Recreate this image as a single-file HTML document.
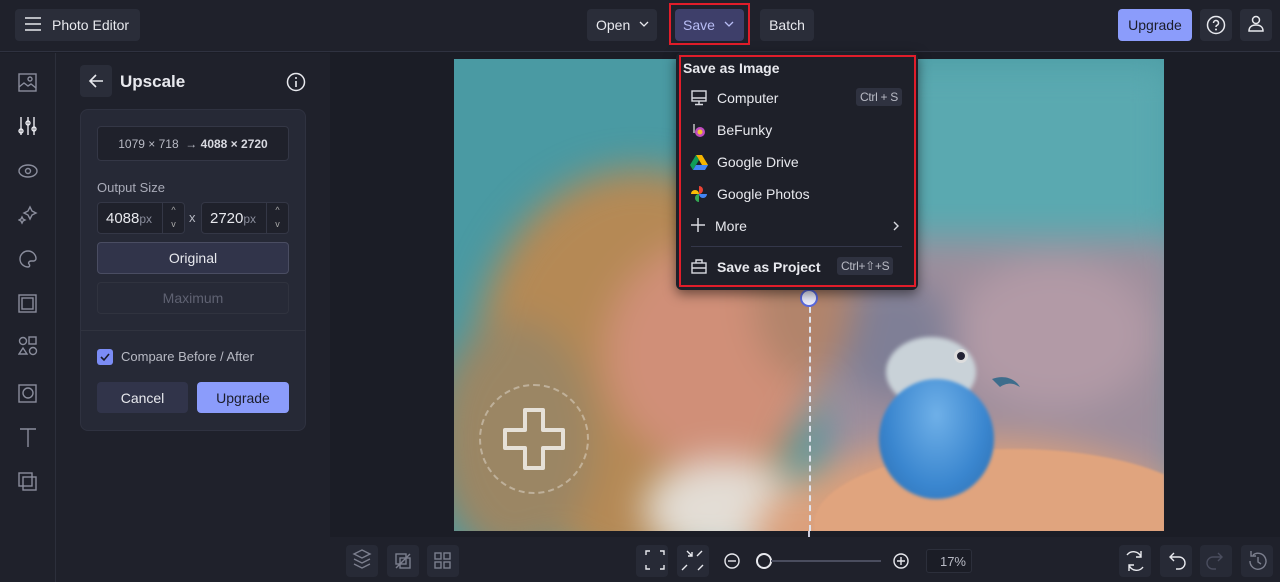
<!DOCTYPE html>
<html><head><meta charset="utf-8"><style>
*{box-sizing:border-box;margin:0;padding:0}
body{width:1280px;height:582px;overflow:hidden;background:#1b1d26;font-family:"Liberation Sans",sans-serif;color:#e8e9ee;position:relative}
.a{position:absolute}
.top{left:0;top:0;width:1280px;height:52px;background:#1f212b;border-bottom:1px solid #2f3240}
.btn{position:absolute;background:#2a2d39;border-radius:4px;color:#e8e9ee;font-size:14px;display:flex;align-items:center;justify-content:center}
.side{left:0;top:53px;width:56px;height:529px;background:#1f212b;border-right:1px solid #2c2f3b}
.panel{left:56px;top:53px;width:274px;height:529px;background:#1f212b}
.card{left:80px;top:109px;width:226px;height:322px;background:#262936;border:1px solid #2f3240;border-radius:8px}
.field{position:absolute;background:#1f212b;border:1px solid #343746;border-radius:4px}
.menu{left:676px;top:52px;width:242px;height:238px;background:#1e2029;border-radius:6px;box-shadow:0 4px 12px rgba(0,0,0,.5)}
.mi{position:absolute;left:41px;font-size:14px;color:#e8e9ee}
.kbd{position:absolute;background:#2f3240;border-radius:3px;font-size:12px;color:#b8bac4;padding:2px 4px;letter-spacing:-.3px}
.bottom{left:330px;top:537px;width:950px;height:45px;background:#1f212b}
.ib{position:absolute;width:32px;height:32px;background:#272a36;border-radius:4px}
svg{position:absolute}
.bl{position:absolute;border-radius:50%}
</style></head><body>
<div class="a top"></div>
<div class="btn" style="left:15px;top:9px;width:125px;height:32px;justify-content:flex-start;padding-left:37px">Photo Editor</div>
<svg style="left:25px;top:17px" width="16" height="14"><path d="M0 1h16M0 7h16M0 13h16" stroke="#e8e9ee" stroke-width="1.6"/></svg>
<div class="btn" style="left:587px;top:9px;width:70px;height:32px"></div>
<div class="a" style="left:596px;top:17px;font-size:14px">Open</div>
<svg style="left:639px;top:21px" width="10" height="7"><path d="M1 1l4 4 4-4" fill="none" stroke="#e8e9ee" stroke-width="1.3"/></svg>
<div class="a" style="left:669px;top:3px;width:81px;height:42px;border:2px solid #e11d2a"></div>
<div class="btn" style="left:675px;top:9px;width:69px;height:32px;background:#3e3f6a"></div>
<div class="a" style="left:683px;top:17px;font-size:14px;color:#b8bdf5">Save</div>
<svg style="left:724px;top:21px" width="10" height="7"><path d="M1 1l4 4 4-4" fill="none" stroke="#b8bdf5" stroke-width="1.3"/></svg>
<div class="btn" style="left:760px;top:9px;width:54px;height:32px">Batch</div>
<div class="btn" style="left:1118px;top:9px;width:74px;height:32px;background:#8b9cfb;color:#1b1d2a">Upgrade</div>
<div class="btn" style="left:1200px;top:9px;width:32px;height:32px"></div>
<svg style="left:1206px;top:15px" width="20" height="20"><circle cx="10" cy="10" r="8.5" fill="none" stroke="#e8e9ee" stroke-width="1.5"/><path d="M7.5 8a2.5 2.5 0 1 1 3.5 2.3c-.8.4-1 .8-1 1.7" fill="none" stroke="#e8e9ee" stroke-width="1.5"/><circle cx="10" cy="14.5" r="1" fill="#e8e9ee"/></svg>
<div class="btn" style="left:1240px;top:9px;width:32px;height:32px"></div>
<svg style="left:1246px;top:14px" width="20" height="20"><circle cx="10" cy="6" r="3.5" fill="none" stroke="#e8e9ee" stroke-width="1.5"/><path d="M3 17c0-4 3-6 7-6s7 2 7 6z" fill="none" stroke="#e8e9ee" stroke-width="1.5"/></svg>

<div class="a side"></div>
<svg style="left:18px;top:73px" width="20" height="420" fill="none" stroke="#8a8d9c" stroke-width="1.4">
<rect x="1" y="1" width="17" height="17"/><path d="M1 14l5-4 4 3 3-2 5 4"/><circle cx="12" cy="6" r="2"/>
<g stroke="#e8e9ee"><path d="M3 44v18M10 44v18M16 44v18"/><circle cx="3" cy="58" r="2"/><circle cx="10" cy="50" r="2"/><circle cx="16" cy="56" r="2"/></g>
<ellipse cx="10" cy="98" rx="9" ry="6"/><circle cx="10" cy="98" r="2.5"/>
<path d="M12 134l2 4 4 2-4 2-2 4-2-4-4-2 4-2zM4 144l1 2 2 1-2 1-1 2-1-2-2-1 2-1z"/>
<path d="M10 178a8 8 0 1 0 0 16c2 0 2-2 1-3s0-3 2-3h3a3 3 0 0 0 2-3 8 8 0 0 0-8-7z"/>
<rect x="1" y="222" width="17" height="17"/><rect x="4" y="225" width="11" height="11"/>
<circle cx="5" cy="268" r="3.5"/><rect x="11" y="264" width="7" height="7"/><path d="M1 281l4-6 4 6z"/><circle cx="15" cy="278" r="3.5"/>
<rect x="1" y="312" width="17" height="17"/><circle cx="10" cy="320" r="5"/>
<path d="M2 356h16M10 356v18"/>
<rect x="1" y="400" width="13" height="13"/><rect x="5" y="404" width="13" height="13"/>
</svg>

<div class="a panel"></div>
<div class="btn" style="left:80px;top:65px;width:32px;height:32px"></div>
<svg style="left:88px;top:73px" width="16" height="16"><path d="M15 8H2M8 2L2 8l6 6" fill="none" stroke="#e8e9ee" stroke-width="1.6"/></svg>
<div class="a" style="left:120px;top:72px;font-size:17px;font-weight:bold">Upscale</div>
<svg style="left:286px;top:72px" width="20" height="20"><circle cx="10" cy="10" r="8.5" fill="none" stroke="#e8e9ee" stroke-width="1.5"/><path d="M10 9v6" stroke="#e8e9ee" stroke-width="1.6"/><circle cx="10" cy="6" r="1" fill="#e8e9ee"/></svg>
<div class="a card"></div>
<div class="field" style="left:97px;top:126px;width:192px;height:35px;font-size:12px;color:#b8bac4;display:flex;align-items:center;justify-content:center">1079 × 718 &nbsp;→&nbsp; <b style="color:#d8d9e0">4088 × 2720</b></div>
<div class="a" style="left:97px;top:180px;font-size:13px;color:#a9abb8">Output Size</div>
<div class="field" style="left:97px;top:202px;width:88px;height:32px"><span class="a" style="left:8px;top:7px;font-size:15px">4088<span style="font-size:12px;color:#8a8d9c">px</span></span><span class="a" style="left:64px;top:0;height:30px;border-left:1px solid #343746;width:22px;color:#aaa;font-size:9px;text-align:center;line-height:14px">^<br>v</span></div>
<div class="a" style="left:189px;top:210px;font-size:13px;color:#b8bac4">x</div>
<div class="field" style="left:201px;top:202px;width:88px;height:32px"><span class="a" style="left:8px;top:7px;font-size:15px">2720<span style="font-size:12px;color:#8a8d9c">px</span></span><span class="a" style="left:64px;top:0;height:30px;border-left:1px solid #343746;width:22px;color:#aaa;font-size:9px;text-align:center;line-height:14px">^<br>v</span></div>
<div class="btn" style="left:97px;top:242px;width:192px;height:32px;background:#31344a;border:1px solid #4a4d62">Original</div>
<div class="btn" style="left:97px;top:282px;width:192px;height:32px;background:#272a37;border:1px solid #30333f;color:#5f6272;font-size:14px">Maximum</div>
<div class="a" style="left:81px;top:330px;width:224px;border-top:1px solid #30333f"></div>
<div class="a" style="left:97px;top:349px;width:16px;height:16px;background:#7b8cf5;border-radius:3px"></div>
<svg style="left:99px;top:351px" width="12" height="12"><path d="M2 6l3 3 5-6" fill="none" stroke="#1b1d2a" stroke-width="1.6"/></svg>
<div class="a" style="left:121px;top:349px;font-size:13px;color:#b8bac4">Compare Before / After</div>
<div class="btn" style="left:97px;top:382px;width:91px;height:31px;background:#31344a;font-size:14px">Cancel</div>
<div class="btn" style="left:197px;top:382px;width:92px;height:31px;background:#8b9cfb;color:#1b1d2a;font-size:14px">Upgrade</div>

<div class="a" style="left:454px;top:59px;width:710px;height:472px;overflow:hidden;background:#4a9aa3">
<div class="a" style="left:0;top:0;width:710px;height:472px;filter:blur(18px)">
<div class="a" style="left:360px;top:0;width:360px;height:200px;background:#5aa9b0"></div>
<div class="a" style="left:370px;top:180px;width:360px;height:300px;background:#9e8e9c"></div>
<div class="bl" style="left:500px;top:200px;width:200px;height:150px;background:#b29aa6"></div>
<div class="bl" style="left:380px;top:220px;width:120px;height:120px;background:#7f7f96"></div>
<div class="bl" style="left:20px;top:110px;width:330px;height:400px;background:#b58955"></div>
<div class="bl" style="left:-20px;top:260px;width:160px;height:240px;background:#9b8664"></div>
<div class="bl" style="left:150px;top:180px;width:220px;height:230px;background:#d08f78"></div>
<div class="bl" style="left:300px;top:160px;width:100px;height:160px;background:#b2846b"></div>
<div class="bl" style="left:190px;top:400px;width:160px;height:100px;background:#e3ddd5"></div>
<div class="bl" style="left:300px;top:380px;width:450px;height:200px;background:#dba07c"></div>
</div>
<div class="a" style="left:300px;top:260px;width:410px;height:212px;overflow:hidden;filter:blur(1px)">
<div class="a" style="left:60px;top:130px;width:400px;height:150px;border-radius:50% 50% 0 0;background:#e0a47e"></div>
</div>
<div class="bl" style="left:432px;top:278px;width:90px;height:70px;background:#c9d2d8;filter:blur(2px)"></div>
<div class="bl" style="left:425px;top:320px;width:115px;height:120px;background:radial-gradient(ellipse at 50% 30%,#6fb0e8,#3a86cf 60%,#2c6cad);filter:blur(1.5px)"></div>
<svg style="left:538px;top:316px" width="36" height="26"><path d="M0 4c10-4 22-2 28 8l-4-2c-4-2-10-2-16 2z" fill="#3e6d8c"/></svg>
<div class="bl" style="left:500px;top:290px;width:14px;height:14px;background:#223;border:3px solid #ddd"></div>
<div class="a" style="left:355px;top:0;width:1px;height:472px;border-left:2px dashed #e0e4f0"></div>
<div class="a" style="left:346px;top:230px;width:18px;height:18px;border-radius:50%;background:#eef0ff;border:2px solid #5a6ae0"></div>
<div class="bl" style="left:25px;top:325px;width:110px;height:110px;border:2px dashed rgba(255,255,255,.35)"></div>
<svg style="left:45px;top:345px" width="70" height="70"><path d="M26 6h18v20h20v18H44v20H26V44H6V26h20z" fill="none" stroke="rgba(255,255,255,.75)" stroke-width="4" stroke-linejoin="round"/></svg>
</div>
<div class="a" style="left:808px;top:531px;height:6px;border-left:2px dashed #ccd"></div>

<div class="a menu"></div>
<div class="a" style="left:679px;top:55px;width:237px;height:232px;border:2px solid #e11d2a"></div>
<div class="a" style="left:683px;top:60px;font-size:14px;font-weight:bold">Save as Image</div>
<svg style="left:691px;top:90px" width="16" height="16" fill="none" stroke="#d8d9e0" stroke-width="1.4"><rect x="1" y="1" width="14" height="10"/><path d="M8 11v3M4 14.5h8M1 8h14"/></svg>
<div class="mi" style="left:717px;top:90px">Computer</div><div class="kbd" style="left:856px;top:88px">Ctrl + S</div>
<svg style="left:691px;top:122px" width="16" height="16"><circle cx="9" cy="10" r="5" fill="#c04cc0"/><circle cx="9" cy="10" r="2.5" fill="#f2c230"/><path d="M3 2v9" stroke="#ccc" stroke-width="1.4"/></svg>
<div class="mi" style="left:717px;top:122px">BeFunky</div>
<svg style="left:690px;top:154px" width="18" height="16"><path d="M6 1h6l6 10H12z" fill="#f4b400"/><path d="M6 1L0 11l3 5 6-10z" fill="#0f9d58"/><path d="M3 16h12l3-5H6z" fill="#4285f4"/></svg>
<div class="mi" style="left:717px;top:154px">Google Drive</div>
<svg style="left:690px;top:185px" width="18" height="18"><path d="M9 9V1a4 4 0 0 1 0 8z" fill="#ea4335"/><path d="M9 9h8a4 4 0 0 1-8 0z" fill="#4285f4"/><path d="M9 9v8a4 4 0 0 1 0-8z" fill="#34a853"/><path d="M9 9H1a4 4 0 0 1 8 0z" fill="#fbbc05"/></svg>
<div class="mi" style="left:717px;top:186px">Google Photos</div>
<svg style="left:691px;top:218px" width="14" height="14"><path d="M7 0v14M0 7h14" stroke="#d8d9e0" stroke-width="1.5"/></svg>
<div class="mi" style="left:715px;top:218px">More</div>
<svg style="left:892px;top:221px" width="8" height="10"><path d="M2 1l4 4-4 4" fill="none" stroke="#d8d9e0" stroke-width="1.4"/></svg>
<div class="a" style="left:691px;top:246px;width:211px;border-top:1px solid #34374a"></div>
<svg style="left:691px;top:259px" width="16" height="15" fill="none" stroke="#d8d9e0" stroke-width="1.4"><rect x="1" y="4" width="14" height="10"/><path d="M5 4V1h6v3M1 9h14"/></svg>
<div class="mi" style="left:717px;top:259px;font-weight:bold">Save as Project</div><div class="kbd" style="left:837px;top:257px">Ctrl+⇧+S</div>

<div class="a bottom"></div>
<div class="ib" style="left:346px;top:545px"></div><div class="ib" style="left:387px;top:545px"></div><div class="ib" style="left:427px;top:545px"></div>
<div class="ib" style="left:636px;top:545px"></div><div class="ib" style="left:677px;top:545px"></div>
<div class="ib" style="left:1119px;top:545px"></div><div class="ib" style="left:1160px;top:545px"></div><div class="ib" style="left:1200px;top:545px"></div><div class="ib" style="left:1241px;top:545px"></div>
<svg style="left:330px;top:537px" width="950" height="45" fill="none" stroke="#7c7f8e" stroke-width="1.4">
<path d="M24 17l8-4 8 4-8 4zM24 22l8 4 8-4M24 27l8 4 8-4"/>
<rect x="66" y="17" width="10" height="10"/><rect x="70" y="21" width="10" height="10"/><path d="M66 31l14-14"/>
<rect x="105" y="16" width="6" height="6"/><rect x="114" y="16" width="6" height="6"/><rect x="105" y="25" width="6" height="6"/><rect x="114" y="25" width="6" height="6"/>
<g stroke="#e8e9ee"><path d="M316 18v-4h4M330 14h4v4M334 28v4h-4M320 32h-4v-4"/>
<path d="M357 14l5 5M362 15v4h-4M372 14l-5 5M373 28l-5 5M352 33l5-5"/>
<circle cx="402" cy="24" r="7"/><path d="M398 24h8"/>
<circle cx="434" cy="24" r="7" fill="#1f212b" stroke-width="2"/><path d="M441 24h110" stroke="#4a4d5e" stroke-width="2"/>
<circle cx="571" cy="24" r="7"/><path d="M567 24h8M571 20v8"/>
<path d="M797 18a8 8 0 0 1 14 2M813 30a8 8 0 0 1-14-2M811 14v6h-5M799 34v-6h5"/>
<path d="M840 20h9a6 6 0 0 1 0 12h-3M844 16l-4 4 4 4"/></g>
<path d="M892 20h-9a6 6 0 0 0 0 12h3M888 16l4 4-4 4" stroke="#4a4d5e"/>
<path d="M920 24a8 8 0 1 0 3-6M921 14v5h5M928 20v5l3 2"/>
</svg>
<div class="a" style="left:926px;top:549px;width:46px;height:24px;background:#1b1d26;border:1px solid #2c2f3b;border-radius:3px;font-size:13px;color:#b8bac4;text-align:right;padding:4px 5px">17%</div>
</body></html>
